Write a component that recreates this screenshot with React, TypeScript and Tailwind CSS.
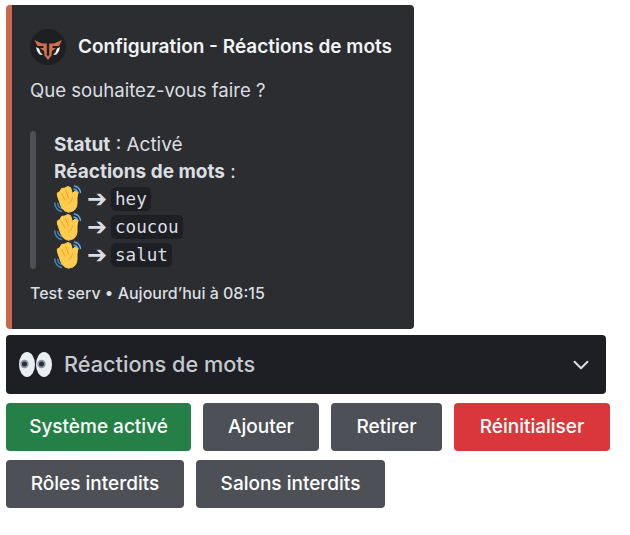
import { ChevronDown } from 'lucide-react';

function Logo() {
  return (
    <svg viewBox="0 0 36 36" className="w-9 h-9 shrink-0">
      <circle cx="18" cy="18" r="18" fill="#1e1f22" />
      <path d="M4.500 11 L12 14.500 L16.800 14.500 L16.800 26 L18 27.500 L19.200 26 L19.200 14.500 L24 14.500 L32 11 L29 17 L22.500 17 L22.500 19 L26 19 L22 22 L21.500 26.500 L18 31 L14.500 26.500 L14 22 L10 19 L13.500 19 L13.500 17 L7.500 17 Z" fill="#d0704f" />
      <path d="M6 18 L9 19.500 L10.500 23.500 L13 26 L9.500 25.500 L7 22 Z M30 18 L27 19.500 L25.500 23.500 L23 26 L26.500 25.500 L29 22 Z" fill="#f2f3f5" />
    </svg>
  );
}

function Wave() {
  return (
    <svg viewBox="0 0 27 28" className="w-[27px] h-7 shrink-0" fill="none" strokeLinecap="round" strokeLinejoin="round">
      <path d="M20.500 1 C23.500 1.500 26 4 26.500 7.500 M20 4 C22 4.500 23.500 6 24 8" stroke="#5dadec" strokeWidth="1.500" />
      <path d="M0.800 18 C1 22 3.500 25.500 7.500 26.500 M3.800 18.500 C4 21 5.500 23 8 23.500" stroke="#3b88c3" strokeWidth="1.500" />
      <path d="M14.500 27 C11 27 8.500 24.500 7 21 L3.500 11 L3.300 8 L6 6.500 L7.500 3.500 L11 3 L13.500 1.500 L16.500 2.500 L18.500 8.500 L21 6 L23.800 7.500 L23 13 L23 19 C22.500 24 19.500 27 14.500 27 Z" fill="#ffcc4d" stroke="#ffcc4d" strokeWidth="1" />
      <path d="M7.500 8.500 L11 15 M11.500 5.500 L14.500 13 M14.500 19 C16 17.500 18 16 18.500 12.500" stroke="#f19020" strokeWidth="0.800" />
    </svg>
  );
}

function Eyes() {
  return (
    <svg viewBox="0 0 33 25" className="w-[33px] h-[25px] shrink-0">
      <ellipse cx="8" cy="12.500" rx="8" ry="12.500" fill="#e9eef2" />
      <ellipse cx="25" cy="12.500" rx="8" ry="12.500" fill="#e9eef2" />
      <circle cx="5.500" cy="12" r="4.200" fill="#8a97a0" />
      <circle cx="22.500" cy="12" r="4.200" fill="#8a97a0" />
      <circle cx="5.500" cy="12" r="2.500" fill="#292f33" />
      <circle cx="22.500" cy="12" r="2.500" fill="#292f33" />
    </svg>
  );
}

function WordRow({ word }: { word: string }) {
  return (
    <div className="flex items-center h-7">
      <Wave />
      <span className="ml-[6px] w-[24px] text-[24px] leading-7 font-bold font-['DejaVu_Sans',sans-serif] text-[#dbdee1]">➔</span>
      <code className="h-6 px-[4px] rounded-[5px] bg-[#1e1f24] text-[#dbdee1] text-[17.6px] leading-6 font-['DejaVu_Sans_Mono',monospace]">{word}</code>
    </div>
  );
}

function Btn({ label, color, width }: { label: string; color: string; width: string }) {
  return (
    <button className={`${color} ${width} h-12 pt-px rounded-[4px] text-white text-[19px] font-medium text-center`}>
      {label}
    </button>
  );
}

export default function App() {
  return (
    <div className="pl-[6px] pt-[5px] bg-white min-h-[535px] font-['Inter',sans-serif]">
      {/* embed */}
      <div className="w-[408px] h-[324px] rounded-[4px] border-l-[6px] border-[#c9694c] bg-[#2b2d31] pl-[18px] pt-[24px]">
        <div className="flex items-center gap-3 h-9">
          <Logo />
          <span className="pt-px text-[19px] font-semibold text-[#f2f3f5]">Configuration - Réactions de mots</span>
        </div>
        <p className="mt-[12px] text-[18.6px] leading-[27px] text-[#dbdee1]">Que souhaitez-vous faire ?</p>
        <div className="mt-[27px] flex h-[138px]">
          <div className="w-[6px] rounded-full bg-[#4e5058]" />
          <div className="ml-[18px] text-[19px] text-[#dbdee1]">
            <div className="h-[27px] leading-[27px]"><b className="font-bold">Statut</b> : Activé</div>
            <div className="h-[27px] leading-[27px]"><b className="font-bold">Réactions de mots</b> :</div>
            <WordRow word="hey" />
            <WordRow word="coucou" />
            <WordRow word="salut" />
          </div>
        </div>
        <p className="mt-[12px] text-[16px] leading-[24px] font-medium text-[#dbdee1]">Test serv • Aujourd’hui à 08:15</p>
      </div>

      {/* select */}
      <div className="mt-[6px] w-[600px] h-[59px] rounded-[4px] bg-[#1e1f24] flex items-center pl-[13px] pr-[12px]">
        <Eyes />
        <span className="ml-[12px] flex-1 text-[21.7px] font-medium text-[#c4c9ce]">Réactions de mots</span>
        <ChevronDown strokeWidth={1.8} className="w-[26px] h-[26px] text-[#dbdee1]" />
      </div>

      {/* buttons */}
      <div className="mt-[9px] flex gap-3">
        <Btn label="Système activé" color="bg-[#248046]" width="w-[185px]" />
        <Btn label="Ajouter" color="bg-[#4e5058]" width="w-[116px]" />
        <Btn label="Retirer" color="bg-[#4e5058]" width="w-[111px]" />
        <Btn label="Réinitialiser" color="bg-[#da373c]" width="w-[156px]" />
      </div>
      <div className="mt-[9px] flex gap-3">
        <Btn label="Rôles interdits" color="bg-[#4e5058]" width="w-[178px]" />
        <Btn label="Salons interdits" color="bg-[#4e5058]" width="w-[189px]" />
      </div>
    </div>
  );
}
